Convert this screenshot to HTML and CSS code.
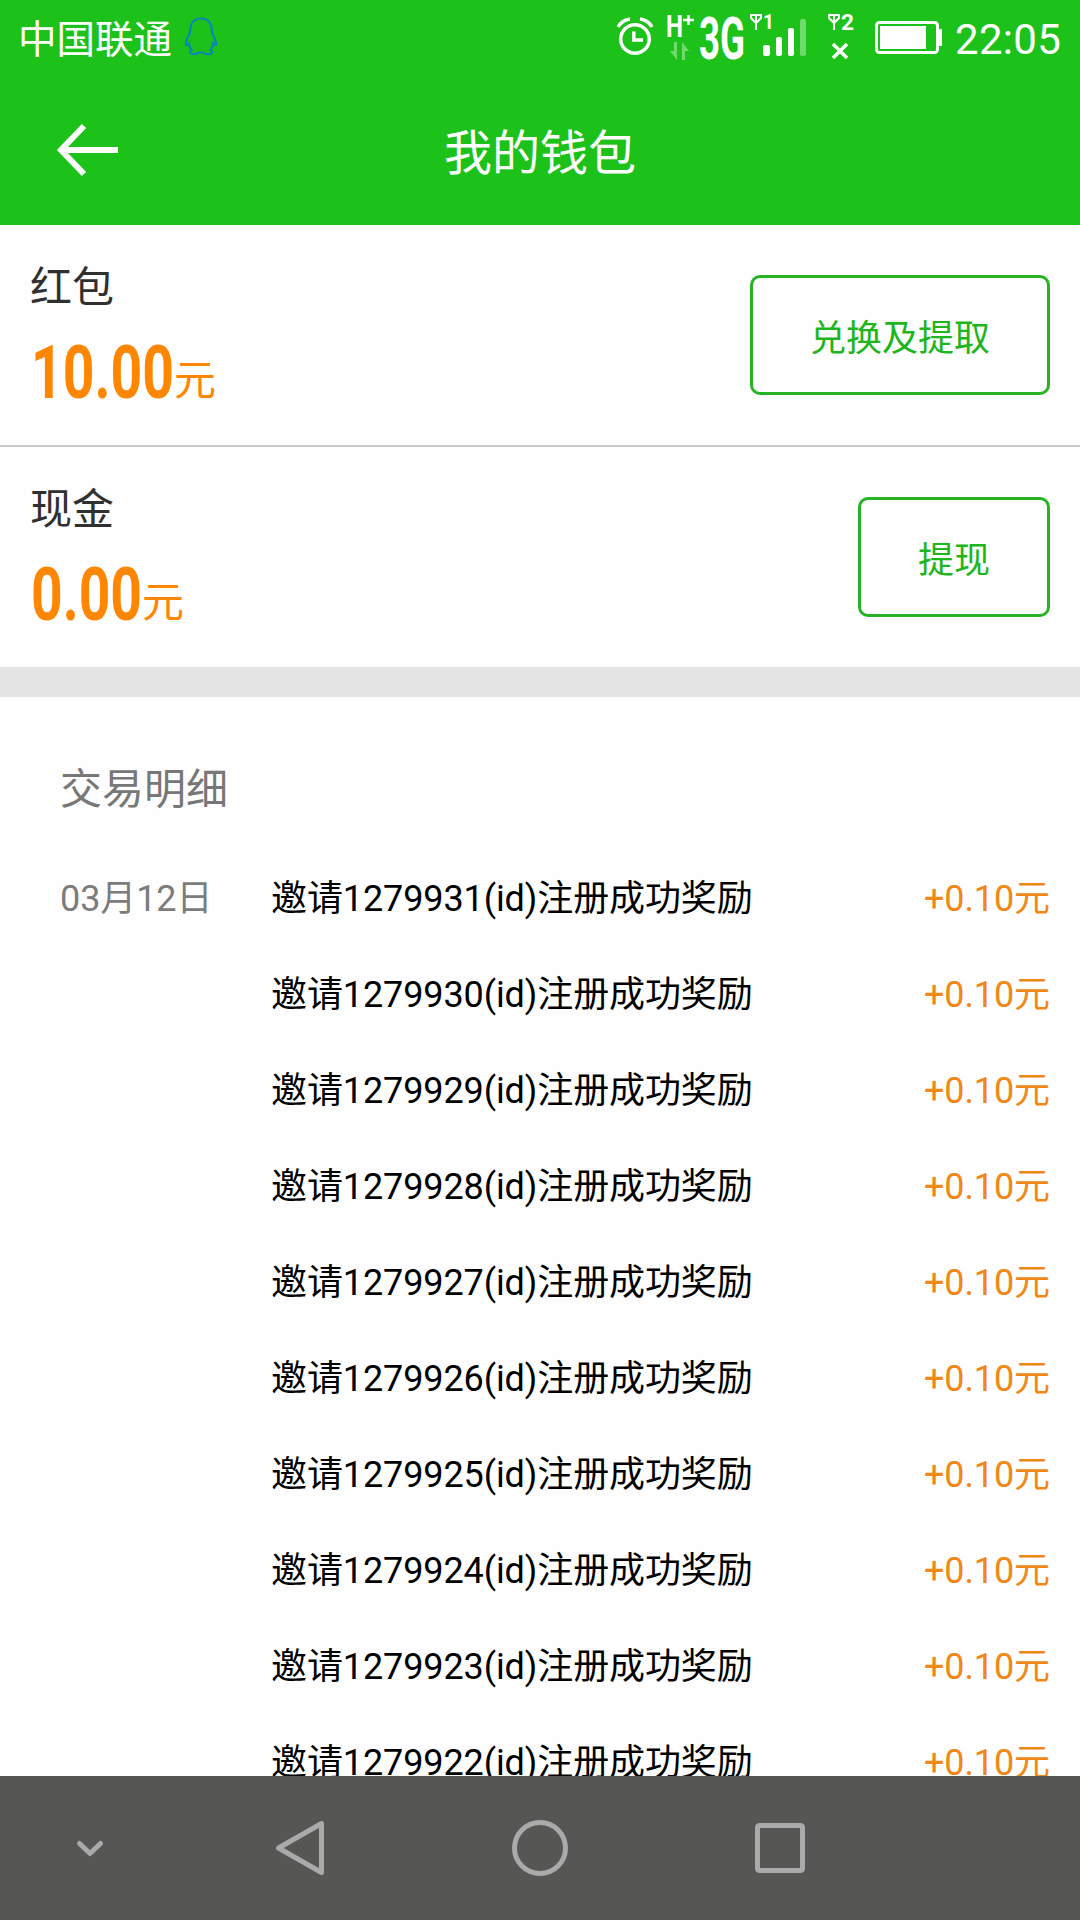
FILE: index.html
```html
<!DOCTYPE html>
<html lang="zh-CN">
<head>
	<meta charset="utf-8">
	<title>我的钱包</title>
	<link rel="stylesheet" href="styles.css">
</head>
<body>
	<div class="top">
		<div class="status">
			<span class="carrier">中国联通</span>
			<svg class="qq" width="36" height="40" viewBox="0 0 36 40">
				<path d="M7 15C7 6 11 1.500 18 1.500S29 6 29 15C29 18 33.500 22 33 28C32 28.500 30.500 27 30 26.500C30 30 28 32 27.500 33C30 34 29.500 36.500 27 37C24 37.300 21.500 37 20 35.500H16C14.500 37 12 37.300 9 37C6.500 36.500 6 34 8.500 33C8 32 6 30 6 26.500C5.500 27 4 28.500 3 28C2.500 22 7 18 7 15Z"/>
			</svg>
			<div class="statusRight">
				<svg class="alarm" width="38" height="40" viewBox="0 0 38 40">
					<circle cx="19" cy="23" r="14.300"/>
					<path d="M17.800 15.500V24H27"/>
					<path d="M2 11Q6 4 14 3M36 11Q32 4 24 3"/>
				</svg>
				<svg class="signal" width="194" height="75" viewBox="0 -8 194 75">
					<text class="small" x="1" y="29" font-size="31" textLength="17" lengthAdjust="spacingAndGlyphs">H</text>
					<path class="line plus" d="M18 12H29M23.500 7V17"/>
					<path class="faint" d="M12 34V52L5 43H9V34ZM17 52V34L24 43H20V52Z"/>
					<text class="big" x="34" y="51" font-size="60" textLength="46" lengthAdjust="spacingAndGlyphs">3G</text>
					<path class="line thin" d="M85 7H97M91 7V22M86 7V10L91 15L96 10V7"/>
					<text class="small" x="98" y="21" font-size="21" textLength="11" lengthAdjust="spacingAndGlyphs">1</text>
					<rect x="98" y="37" width="7" height="11" rx="2"/>
					<rect x="111" y="29" width="6" height="19" rx="2"/>
					<rect x="123" y="20" width="6" height="28" rx="2"/>
					<rect class="faint" x="135" y="11" width="6" height="37" rx="2"/>
					<path class="line thin" d="M163 7H175M169 7V22M164 7V10L169 15L174 10V7"/>
					<text class="small" x="176" y="22" font-size="22" textLength="13" lengthAdjust="spacingAndGlyphs">2</text>
					<path class="line" d="M168 36L182 50M182 36L168 50"/>
				</svg>
				<svg class="battery" width="68" height="34" viewBox="0 0 68 34">
					<rect class="case" x="1.500" y="1.500" width="61" height="30" rx="3"/>
					<rect x="5" y="5" width="46" height="23"/>
					<rect x="64" y="8" width="3" height="17" rx="1"/>
				</svg>
				<span class="clock">22:05</span>
			</div>
		</div>
		<div class="titleBar">
			<svg class="back" width="64" height="54" viewBox="0 0 64 54">
				<path d="M62 27H5M28 3L5 27L28 51"/>
			</svg>
			<span class="title">我的钱包</span>
		</div>
	</div>

	<div class="balance">
		<div class="info">
			<div class="label">红包</div>
			<div class="money">
				<svg width="144" height="96" viewBox="0 0 144 96">
					<text x="1" y="80" textLength="143" lengthAdjust="spacingAndGlyphs">10.00</text>
				</svg><span>元</span>
			</div>
		</div>
		<div class="button wide">兑换及提取</div>
	</div>
	<div class="balance second">
		<div class="info">
			<div class="label">现金</div>
			<div class="money">
				<svg width="112" height="96" viewBox="0 0 112 96">
					<text x="1" y="80" textLength="111" lengthAdjust="spacingAndGlyphs">0.00</text>
				</svg><span>元</span>
			</div>
		</div>
		<div class="button">提现</div>
	</div>
	<div class="separator"></div>

	<div class="details">
		<div class="detailsTitle">交易明细</div>
		<div class="row"><span class="date">03月12日</span><span class="text">邀请1279931(id)注册成功奖励</span><span class="amount">+0.10元</span></div>
		<div class="row"><span class="date"></span><span class="text">邀请1279930(id)注册成功奖励</span><span class="amount">+0.10元</span></div>
		<div class="row"><span class="date"></span><span class="text">邀请1279929(id)注册成功奖励</span><span class="amount">+0.10元</span></div>
		<div class="row"><span class="date"></span><span class="text">邀请1279928(id)注册成功奖励</span><span class="amount">+0.10元</span></div>
		<div class="row"><span class="date"></span><span class="text">邀请1279927(id)注册成功奖励</span><span class="amount">+0.10元</span></div>
		<div class="row"><span class="date"></span><span class="text">邀请1279926(id)注册成功奖励</span><span class="amount">+0.10元</span></div>
		<div class="row"><span class="date"></span><span class="text">邀请1279925(id)注册成功奖励</span><span class="amount">+0.10元</span></div>
		<div class="row"><span class="date"></span><span class="text">邀请1279924(id)注册成功奖励</span><span class="amount">+0.10元</span></div>
		<div class="row"><span class="date"></span><span class="text">邀请1279923(id)注册成功奖励</span><span class="amount">+0.10元</span></div>
		<div class="row"><span class="date"></span><span class="text">邀请1279922(id)注册成功奖励</span><span class="amount">+0.10元</span></div>
	</div>

	<div class="navBar">
		<svg class="hide" width="60" height="60" viewBox="0 0 60 60"><path d="M19.500 25.500L30 35.500L40.500 25.500"/></svg>
		<svg width="60" height="60" viewBox="0 0 60 60"><path d="M51.500 5.500V54.500L8.500 30Z"/></svg>
		<svg width="60" height="60" viewBox="0 0 60 60"><circle cx="30" cy="30" r="25.500"/></svg>
		<svg width="60" height="60" viewBox="0 0 60 60"><rect x="7.500" y="7.500" width="45" height="45" rx="2"/></svg>
	</div>
</body>
</html>
```
FILE: styles.css
```css
body{
	margin: 0;
	width: 1080px;
	height: 1920px;
	overflow: hidden;
	display: flex;
	flex-direction: column;
	background-color: #fefefe;
	font-family: Roboto, 'Noto Sans CJK SC', sans-serif;
	font-size: 36px;
	color: black;
}
svg{
	display: block;
	flex: none;
}
.top{
	height: 225px;
	flex: none;
	background-color: #1cc21a;
	color: white;
}
.status{
	height: 75px;
	display: flex;
	align-items: flex-start;
	padding: 0 19px 0 18px;
	box-sizing: border-box;
}
.carrier{
	font-size: 38.5px;
	line-height: 80px;
}
.qq{
	margin: 17px 0 0 11px;
	fill: none;
	stroke: #0a86b8;
	stroke-width: 2.2;
}
.statusRight{
	margin-left: auto;
	display: flex;
	align-items: flex-start;
}
.alarm{
	margin: 16px 11px 0 0;
	fill: none;
	stroke: white;
	stroke-width: 3.5;
}
.signal{
	margin-right: 16px;
	fill: white;
}
.signal .small{
	font-weight: 700;
}
.signal .big{
	font-weight: 700;
}
.signal .line{
	fill: none;
	stroke: white;
	stroke-width: 3.5;
}
.signal .plus{
	stroke-width: 2.5;
}
.signal .thin{
	stroke-width: 2;
}
.signal .faint{
	fill: #6edb6c;
}
.battery{
	margin: 21px 12px 0 0;
	fill: white;
}
.battery .case{
	fill: none;
	stroke: white;
	stroke-width: 3;
}
.clock{
	width: 106px;
	font-size: 42px;
	line-height: 80px;
	letter-spacing: .3px;
}
.titleBar{
	height: 150px;
	display: grid;
	grid-template-columns: 1fr auto 1fr;
	align-items: center;
	font-size: 48px;
}
.title{
	line-height: 68px;
	padding-top: 8px;
}
.back{
	margin-left: 56px;
	fill: none;
	stroke: white;
	stroke-width: 6;
}
.balance{
	height: 220px;
	flex: none;
	display: flex;
	align-items: center;
	justify-content: space-between;
	padding: 0 30px;
}
.second{
	border-top: 2px solid #c8c8c8;
}
.info{
	align-self: flex-start;
	padding-top: 32px;
}
.label{
	font-size: 42px;
	line-height: 61px;
	color: #303030;
}
.money{
	display: flex;
	align-items: flex-end;
	height: 96px;
	color: #ff8600;
}
.money svg{
	overflow: visible;
	fill: #ff8600;
	font-size: 75px;
	font-weight: 700;
}
.money span{
	font-size: 42px;
	line-height: 48px;
	margin-bottom: 9px;
}
.button{
	box-sizing: border-box;
	width: 192px;
	height: 120px;
	border: 3px solid #27b324;
	border-radius: 10px;
	line-height: 123px;
	text-align: center;
	color: #1fb51c;
}
.wide{
	width: 300px;
}
.separator{
	height: 30px;
	flex: none;
	background-color: #e4e4e4;
}
.details{
	flex: 1;
	min-height: 0;
	overflow: hidden;
	padding: 60px 30px 0 60px;
}
.detailsTitle{
	font-size: 42px;
	line-height: 66px;
	margin-bottom: 27px;
	color: #777;
}
.row{
	height: 96px;
	line-height: 98px;
	display: flex;
	letter-spacing: -.1px;
}
.date{
	width: 211px;
	color: #7c7c7c;
}
.amount{
	margin-left: auto;
	color: #f08818;
}
.navBar{
	height: 144px;
	flex: none;
	display: flex;
	align-items: center;
	gap: 180px;
	padding-left: 60px;
	background-color: #565654;
}
.navBar svg{
	fill: none;
	stroke: #aaa;
	stroke-width: 5;
	stroke-linejoin: round;
	stroke-linecap: round;
}
.navBar .hide{
	margin-right: -30px;
}
```
